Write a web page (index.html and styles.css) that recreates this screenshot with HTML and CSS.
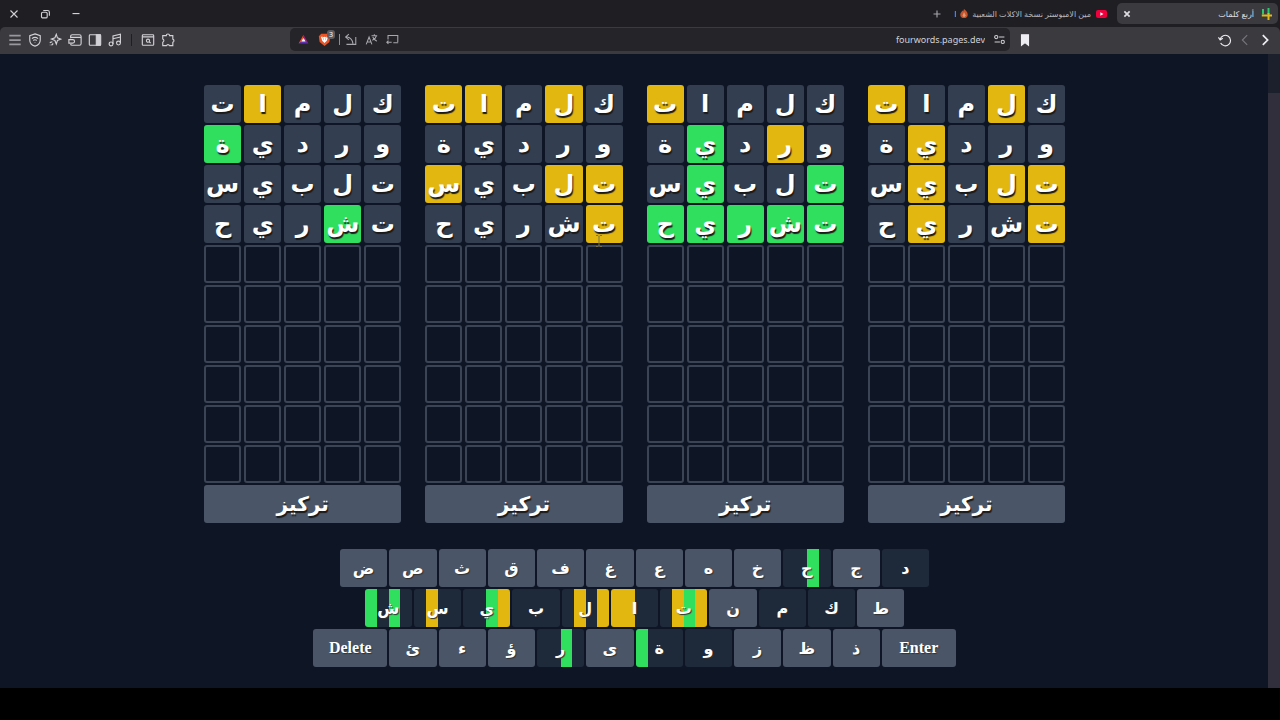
FILE: index.html
```html
<!DOCTYPE html>
<html lang="ar">
<head>
  <meta charset="UTF-8">
  <meta name="viewport" content="width=device-width, initial-scale=1.0">
  <title>أربع كلمات</title>
  <link rel="stylesheet" href="styles.css">
</head>
<body>
  <header class="browser">
    <div class="tab-strip">
      <div class="window-controls">
        <button aria-label="Close"><svg viewBox="0 0 16 16"><path d="M4 4l8 8M12 4l-8 8"/></svg></button>
        <button aria-label="Restore"><svg viewBox="0 0 16 16"><rect x="4" y="6" width="6.500" height="6.500" rx="1.500"/><path d="M6 4h5a2 2 0 0 1 2 2v4"/></svg></button>
        <button aria-label="Minimize"><svg viewBox="0 0 16 16"><path d="M4 7.500h8"/></svg></button>
      </div>
      <div class="tabs">
        <button class="new-tab" aria-label="New tab"><svg viewBox="0 0 16 16"><path d="M8 4v8M4 8h8"/></svg></button>
        <div class="tab">
          <span class="cut">ا</span>
          <svg class="flame" viewBox="0 0 10 12"><path fill="#c5532c" d="M5 0c2 1.500 5 4 5 7.500C10 10.500 7.800 12 5 12S0 10.500 0 7.500C0 5 2.500 3.500 3 2l1 1z"/><path fill="#e09a72" d="M5 4l2.500 5L5 11 3 9z"/></svg>
          <span class="tab-title" dir="rtl">مين الامبوستر نسخة الاكلات الشعبية</span>
          <svg class="youtube" viewBox="0 0 12 10"><rect x="1" y="1" width="11" height="8" rx="2" fill="#f0003c"/><path fill="#fff" d="M5.300 3.200v3.600L8.500 5z"/></svg>
        </div>
        <div class="tab active">
          <button aria-label="Close tab"><svg class="bold" viewBox="0 0 16 16"><path d="M5 5l6 6M11 5l-6 6"/></svg></button>
          <span class="tab-title" dir="rtl">أربع كلمات</span>
          <svg class="favicon" viewBox="0 0 12 12"><path d="M3 1v5.500M8.500 0v6" stroke="#2fc46e"/><path d="M1.800 7.500H12M8.500 5v7" stroke="#e0b81a"/></svg>
        </div>
      </div>
    </div>
    <div class="toolbar">
      <div class="tools">
        <button aria-label="Menu"><svg class="menu-icon" viewBox="0 0 16 16"><path d="M1.500 3h13M1.500 8h13M1.500 13h13"/></svg></button>
        <button aria-label="VPN"><svg viewBox="0 0 16 16"><path d="M8 1l6 2v5c0 3.500-2.500 6-6 7-3.500-1-6-3.500-6-7V3z"/><path d="M4.500 6.500q3.500-3 7 0M6 8.500q2-1.500 4 0M8 10.500v.6"/></svg></button>
        <button aria-label="Leo"><svg viewBox="0 0 16 16"><path d="M9.500 1.500l1.300 4 4 1.500-4 1.600-1.300 4-1.600-4-4-1.600 4-1.500zM2 11l3-1M4 14l2-2M2.500 13.500v.5"/></svg></button>
        <button aria-label="Wallet"><svg viewBox="0 0 16 16"><path d="M3 6V4q0-2 2-2h8q2 0 2 2v8q0 2-2 2H5q-2 0-2-1.500M3 5h12"/><path d="M1 7.500h4.500q2 0 2 2t-2 2H1z"/></svg></button>
        <button aria-label="Sidebar"><svg viewBox="0 0 16 16"><rect x="1.500" y="2" width="13" height="12" rx="1"/><path class="solid" d="M9.500 2H14v12H9.500z"/></svg></button>
        <button aria-label="Media"><svg viewBox="0 0 16 16"><circle cx="3.500" cy="12.500" r="2.200"/><circle cx="12" cy="11.500" r="2.200"/><path d="M5.700 12.500V3.500l8.500-2v10M5.700 6.500l8.500-2"/></svg></button>
        <span class="divider"></span>
        <button aria-label="Search tabs"><svg viewBox="0 0 16 16"><rect x="1.500" y="2" width="13" height="12" rx="1"/><path d="M1.500 4.500h13M9.500 10l1.500 1.500"/><circle cx="8" cy="8.800" r="1.800"/></svg></button>
        <button aria-label="Extensions"><svg viewBox="0 0 16 16"><path d="M2 3h4a1.900 1.900 0 0 1 3.800 0H13.500v4a1.900 1.900 0 0 1 0 3.600V14.500H9.800a1.900 1.900 0 0 0-3.600 0H2v-4a1.900 1.900 0 0 0 0-3.600z"/></svg></button>
      </div>
      <div class="address">
        <div class="address-tools">
          <svg viewBox="0 0 16 16"><path fill="#ff4a20" stroke="none" d="M8 2L2 13l6-3z"/><path fill="#a0207c" stroke="none" d="M8 2l6 11-6-3z"/><path fill="#5c30b8" stroke="none" d="M2 13h12L8 9z"/><path fill="#fff" stroke="none" d="M8 6l2.500 4.500h-5z"/></svg>
          <span class="shield">
            <svg viewBox="0 0 16 16"><path fill="#f05424" stroke="none" d="M4 1h8l3 3-1 7-6 5-6-5-1-7z"/><path stroke="#fff" stroke-width="1.800" d="M4.500 4.500L6 9l2 2 2-2 1.500-4.500M7 5l1 3 1-3"/></svg>
            <span class="badge">3</span>
          </span>
          <span class="bar"></span>
          <svg viewBox="0 0 16 16"><path d="M6 1.500L2 5l4 3.500M2 5h2q6 1 7 8M14.500 5v9H3"/></svg>
          <svg viewBox="0 0 16 16"><path d="M1.500 14L5 5l3.500 9M2.800 11h4.500M8 3.500h7M11.500 1.500v2M14 3.500q-1 4-5 5.500M9.500 5q2 4 5 5"/></svg>
          <svg viewBox="0 0 16 16"><path d="M2.500 8V3h12v8M1 11.500h6M3 9.500l-2 2 2 2M9 12h6"/></svg>
        </div>
        <div class="site">
          <input class="url" type="text" value="fourwords.pages.dev" aria-label="Address">
          <svg viewBox="0 0 16 16"><circle cx="4" cy="5" r="2"/><circle cx="12" cy="11" r="2"/><path d="M7.500 5H14M2 11h6.500"/></svg>
        </div>
      </div>
      <div class="nav">
        <button aria-label="Bookmark"><svg viewBox="0 0 16 16"><path class="solid" d="M4 2h8v12l-4-3-4 3z"/></svg></button>
        <div class="nav-buttons">
          <button aria-label="Reload"><svg viewBox="0 0 16 16"><path d="M3 11.500A6 6 0 1 0 2.500 7M.5 5l2 3 3-2"/></svg></button>
          <button class="dim" aria-label="Forward"><svg viewBox="0 0 16 16"><path d="M10.500 2.500L5 8l5.500 5.500"/></svg></button>
          <button aria-label="Back"><svg class="bold" viewBox="0 0 16 16"><path d="M5.500 2.500L11 8l-5.500 5.500"/></svg></button>
        </div>
      </div>
    </div>
  </header>

  <div class="viewport">
    <main class="game">
      <div class="boards" id="boards" dir="rtl"></div>
      <div class="keyboard" id="keyboard"></div>
    </main>
    <div class="scrollbar"><div class="thumb"></div></div>
    <svg class="cursor" viewBox="0 0 8 12"><path d="M1 .5h2l1 1 1-1h2M4 1.500v9M1 11.500h2l1-1 1 1h2"/></svg>
  </div>
  <footer class="bottom"></footer>

  <script src="script.js"></script>
</body>
</html>
```
FILE: styles.css
```css
* {
  box-sizing: border-box;
}

body {
  margin: 0;
  min-height: 100vh;
  display: flex;
  flex-direction: column;
  background: #000;
  color: #fff;
  font-family: 'Noto Sans', 'DejaVu Sans', sans-serif;
}

button {
  border: 0;
  padding: 0;
  background: none;
  color: inherit;
  font: inherit;
}

svg {
  display: block;
  flex: none;
  fill: none;
  stroke: currentColor;
  stroke-width: 1.3;
}

svg .solid {
  fill: currentColor;
}

svg.bold {
  stroke-width: 2;
}

/* Browser bar */
.browser {
  background: #1f1e23;
  color: #d2d1d6;
  font-size: 8px;
}

.browser svg {
  width: 14px;
  height: 14px;
}

.tab-strip {
  height: 27px;
  display: flex;
  justify-content: space-between;
  align-items: center;
  padding: 0 2px 0 7px;
}

.window-controls {
  display: flex;
  gap: 17px;
}

.tabs {
  display: flex;
  align-items: center;
}

.new-tab {
  margin-right: 10px;
  color: #a5a4aa;
}

.tab {
  height: 21px;
  display: flex;
  align-items: center;
  gap: 4px;
  padding-right: 10px;
  color: #b8b7bd;
}

.tab-title {
  white-space: nowrap;
}

.tab .cut {
  width: 2px;
  overflow: hidden;
}

.browser .flame {
  width: 8px;
  height: 9px;
  stroke: none;
}

.browser .youtube {
  width: 12px;
  height: 10px;
  stroke: none;
}

.browser .favicon {
  width: 12px;
  height: 12px;
  stroke-width: 2;
}

.tab.active {
  width: 161px;
  padding: 0 6px 0 3px;
  gap: 6px;
  border-radius: 5px;
  background: #3b3a3f;
  color: #dddce0;
}

.tab.active .tab-title {
  flex: 1;
}

.toolbar {
  height: 27px;
  display: grid;
  grid-template-columns: 290px 1fr 270px;
  align-items: center;
  padding-bottom: 2px;
  border-radius: 5px 5px 0 0;
  background: #3b3a3f;
}

.tools {
  display: flex;
  align-items: center;
  gap: 6px;
  padding-left: 8px;
}

.tools .menu-icon {
  color: #99989e;
  stroke-width: 2;
}

.divider {
  width: 1px;
  height: 12px;
  margin: 0 3px;
  background: #1f1e23;
}

.address {
  height: 23px;
  display: flex;
  justify-content: space-between;
  align-items: center;
  padding: 0 4px 0 7px;
  border-radius: 5px;
  background: #252429;
}

.address-tools {
  display: flex;
  align-items: center;
  gap: 8px;
  color: #a8a7ad;
}

.address svg {
  width: 13px;
  height: 13px;
}

.shield {
  position: relative;
}

.badge {
  position: absolute;
  top: -3px;
  right: -4px;
  width: 8px;
  height: 9px;
  border-radius: 3px;
  background: #5e5d64;
  color: #fff;
  font-size: 7px;
  line-height: 9px;
  text-align: center;
}

.bar {
  width: 1px;
  height: 11px;
  margin-right: -4px;
  background: #8d8c92;
}

.site {
  display: flex;
  align-items: center;
  gap: 8px;
}

.url {
  width: 120px;
  border: 0;
  padding: 0;
  background: none;
  color: #d2d1d6;
  font: 9px 'Noto Sans', sans-serif;
  text-align: right;
}

.nav,
.nav-buttons {
  display: flex;
  align-items: center;
}

.nav {
  justify-content: space-between;
  padding: 0 8px;
  color: #eeedf2;
}

.nav-buttons {
  gap: 6px;
}

.dim {
  color: #77767c;
}

/* Game */
.viewport {
  position: relative;
  flex: 1;
  display: flex;
  background: #0e1525;
}

.game {
  flex: 1;
  padding: 31px 16px 20px 17px;
}

.boards {
  max-width: 861px;
  margin: 0 auto;
  display: grid;
  grid-template-columns: repeat(4, 1fr);
  gap: 24px;
}

.board {
  display: grid;
  grid-template-columns: repeat(5, 1fr);
  grid-auto-rows: 38px;
  gap: 2px 3px;
}

.tile,
.focus,
.key {
  border-radius: 3px;
  font-family: 'DejaVu Sans', sans-serif;
  font-weight: bold;
  text-align: center;
}

.tile {
  border: 2px solid #3a4454;
  font-size: 24px;
  line-height: 34px;
  text-shadow: 1px 2px 1px #1a1a1a;
}

.tile.absent {
  background: #333f50;
  border-color: #333f50;
}

.tile.present {
  background: #e2b70f;
  border-color: #e2b70f;
}

.tile.correct {
  background: #31df5f;
  border-color: #31df5f;
}

.focus {
  grid-column: 1 / -1;
  background: #4a5667;
  font-size: 20px;
  line-height: 38px;
  text-shadow: 1px 2px 1px #1a1a1a;
}

.keyboard {
  max-width: 643px;
  margin: 26px auto 0;
  display: flex;
  flex-direction: column;
  gap: 2px;
}

.key-row {
  display: flex;
  justify-content: center;
  gap: 2px;
}

.key {
  --q1: #1e293a;
  --q2: #1e293a;
  --q3: #1e293a;
  --q4: #1e293a;
  width: 7.35%;
  height: 38px;
  background: #4a5667;
  font-size: 16px;
  text-shadow: 1px 1px 1px #333;
}

.key.wide {
  width: 11.5%;
  font-family: 'Liberation Serif', serif;
}

.key.used {
  background: linear-gradient(90deg, var(--q1) 25%, var(--q2) 25% 50%, var(--q3) 50% 75%, var(--q4) 75%);
}

.key.p1 { --q1: #e2b70f; }
.key.p2 { --q2: #e2b70f; }
.key.p4 { --q4: #e2b70f; }
.key.c1 { --q1: #31df5f; }
.key.c3 { --q3: #31df5f; }

.scrollbar {
  width: 12px;
  padding-top: 39px;
  display: flex;
  background: #1c202c;
}

.thumb {
  flex: 1;
  background: #302f3b;
}

.cursor {
  position: absolute;
  left: 595px;
  top: 181px;
  width: 8px;
  height: 12px;
  stroke: #77704a;
  stroke-width: 1;
}

.bottom {
  height: 32px;
}
```
FILE: script.js
```js
const guesses = ['كلمات', 'وردية', 'تلبيس', 'تشريح'];
const rowCount = 10;

// One result string per guess, in reading order: a = absent, p = present, c = correct
const results = [
  ['apaap', 'aaapa', 'ppapa', 'paapa'],
  ['aaaap', 'apaca', 'caaca', 'ccccc'],
  ['apapp', 'aaaaa', 'ppaap', 'paaaa'],
  ['aaapa', 'aaaac', 'aaaaa', 'acaaa']
];
const states = { a: 'absent', p: 'present', c: 'correct' };

const boards = document.getElementById('boards');
results.forEach(result => {
  const board = document.createElement('section');
  board.className = 'board';
  for (let row = 0; row < rowCount; row++) {
    for (let col = 0; col < 5; col++) {
      const tile = document.createElement('div');
      tile.className = 'tile';
      if (guesses[row]) {
        tile.classList.add(states[result[row][col]]);
        tile.textContent = guesses[row][col];
      }
      board.appendChild(tile);
    }
  }
  const focus = document.createElement('button');
  focus.className = 'focus';
  focus.textContent = 'تركيز';
  board.appendChild(focus);
  boards.appendChild(board);
});

const keyRows = [
  'ض ص ث ق ف غ ع ه خ ح ج د',
  'ش س ي ب ل ا ت ن م ك ط',
  'Delete ئ ء ؤ ر ى ة و ز ظ ذ Enter'
];

// Colour of each quarter of a key, one quarter per board
const used = {
  'ح': 'c3', 'د': '', 'ش': 'c1 c3', 'س': 'p2', 'ي': 'c3 p4', 'ب': '',
  'ل': 'p2 p4', 'ا': 'p1 p2', 'ت': 'p2 c3 p4', 'م': '', 'ك': '',
  'ر': 'c3', 'ة': 'c1', 'و': ''
};

const keyboard = document.getElementById('keyboard');
keyRows.forEach(keys => {
  const row = document.createElement('div');
  row.className = 'key-row';
  keys.split(' ').forEach(letter => {
    const key = document.createElement('button');
    key.className = 'key';
    if (letter.length > 1) key.classList.add('wide');
    if (letter in used) key.className += ' used ' + used[letter];
    key.textContent = letter;
    row.appendChild(key);
  });
  keyboard.appendChild(row);
});
```
